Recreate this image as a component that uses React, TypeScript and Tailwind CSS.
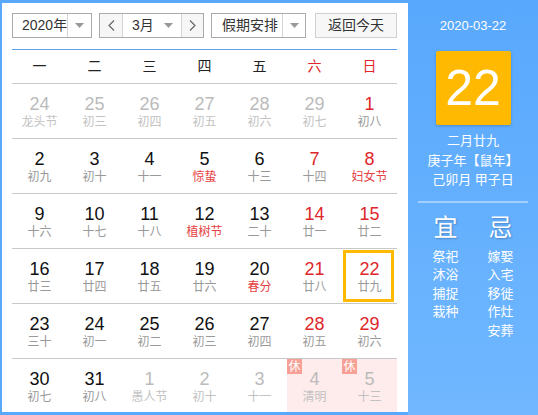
import React from "react";

type Day = {
  n: number;
  l: string;
  other?: boolean;
  red?: boolean;
  fest?: boolean;
  today?: boolean;
  rest?: boolean;
};

const weekdays = ["一", "二", "三", "四", "五", "六", "日"];

const rows: Day[][] = [
  [
    { n: 24, l: "龙头节", other: true },
    { n: 25, l: "初三", other: true },
    { n: 26, l: "初四", other: true },
    { n: 27, l: "初五", other: true },
    { n: 28, l: "初六", other: true },
    { n: 29, l: "初七", other: true },
    { n: 1, l: "初八", red: true },
  ],
  [
    { n: 2, l: "初九" },
    { n: 3, l: "初十" },
    { n: 4, l: "十一" },
    { n: 5, l: "惊蛰", fest: true },
    { n: 6, l: "十三" },
    { n: 7, l: "十四", red: true },
    { n: 8, l: "妇女节", red: true, fest: true },
  ],
  [
    { n: 9, l: "十六" },
    { n: 10, l: "十七" },
    { n: 11, l: "十八" },
    { n: 12, l: "植树节", fest: true },
    { n: 13, l: "二十" },
    { n: 14, l: "廿一", red: true },
    { n: 15, l: "廿二", red: true },
  ],
  [
    { n: 16, l: "廿三" },
    { n: 17, l: "廿四" },
    { n: 18, l: "廿五" },
    { n: 19, l: "廿六" },
    { n: 20, l: "春分", fest: true },
    { n: 21, l: "廿八", red: true },
    { n: 22, l: "廿九", red: true, today: true },
  ],
  [
    { n: 23, l: "三十" },
    { n: 24, l: "初一" },
    { n: 25, l: "初二" },
    { n: 26, l: "初三" },
    { n: 27, l: "初四" },
    { n: 28, l: "初五", red: true },
    { n: 29, l: "初六", red: true },
  ],
  [
    { n: 30, l: "初七" },
    { n: 31, l: "初八" },
    { n: 1, l: "愚人节", other: true },
    { n: 2, l: "初十", other: true },
    { n: 3, l: "十一", other: true },
    { n: 4, l: "清明", other: true, rest: true },
    { n: 5, l: "十三", other: true, rest: true },
  ],
];

const yi = ["祭祀", "沐浴", "捕捉", "栽种"];
const ji = ["嫁娶", "入宅", "移徙", "作灶", "安葬"];

const Caret = () => (
  <svg width="9" height="5" viewBox="0 0 9 5">
    <path d="M0 0h9L4.5 5z" fill="#999" />
  </svg>
);

const Cell = ({ d }: { d: Day }) => {
  const numColor = d.other ? "text-[#bbbbbb]" : d.red ? "text-[#e0262b]" : "text-[#111]";
  const lunarColor = d.other ? "text-[#c2c2c2]" : d.fest ? "text-[#e6403f]" : "text-[#999]";
  return (
    <div className={`relative flex h-[54px] flex-col items-center pt-[9px] ${d.rest ? "bg-[#fdeceb]" : ""}`}>
      {d.rest && (
        <span className="absolute left-0 top-0 flex h-[15px] w-[15px] items-center justify-center bg-[#f7a096] text-[12px] leading-none text-white">
          休
        </span>
      )}
      {d.today && <div className="absolute bottom-[1px] left-[1px] right-[3px] top-[1px] border-[3px] border-[#ffb900]" />}
      <span className={`text-[18px] leading-[22px] ${numColor}`}>{d.n}</span>
      <span className={`text-[12px] leading-[14px] ${lunarColor}`}>{d.l}</span>
    </div>
  );
};

export default function App() {
  return (
    <div
      className="flex h-[415px] w-[538px] overflow-hidden bg-[#5aa8fb] pb-[3px] pl-[2px] pt-[3px]"
      style={{ fontFamily: '"Liberation Sans", "Noto Sans CJK SC", sans-serif' }}
    >
      <div className="h-full w-[406px] overflow-hidden bg-white pl-[10px] pr-[11px] pt-[10px]">
        {/* header controls */}
        <div className="flex h-[25px] whitespace-nowrap text-[14px] text-[#333]">
          <div className="flex w-[80px] border border-[#aaa]">
            <span className="flex w-[54px] items-center pl-[9px]">2020年</span>
            <span className="flex flex-1 items-center justify-center border-l border-[#d5d5d5]">
              <Caret />
            </span>
          </div>
          <div className="ml-[7px] flex w-[105px] border border-[#aaa]">
            <span className="flex w-[22px] items-center justify-center bg-[#f6f6f6] text-[#666]">
              <svg width="7" height="11" viewBox="0 0 7 11">
                <path d="M6 0.5L1 5.5l5 5" fill="none" stroke="#666" strokeWidth="1.2" />
              </svg>
            </span>
            <span className="flex w-[60px] items-center justify-between border-x border-[#d5d5d5] pl-[9px] pr-[8px]">
              3月
              <Caret />
            </span>
            <span className="flex flex-1 items-center justify-center bg-[#f6f6f6]">
              <svg width="7" height="11" viewBox="0 0 7 11">
                <path d="M1 0.5l5 5-5 5" fill="none" stroke="#666" strokeWidth="1.2" />
              </svg>
            </span>
          </div>
          <div className="ml-[7px] flex w-[95px] border border-[#aaa]">
            <span className="flex w-[70px] items-center pl-[10px]">假期安排</span>
            <span className="flex flex-1 items-center justify-center border-l border-[#d5d5d5]">
              <Caret />
            </span>
          </div>
          <div className="ml-auto flex w-[82px] items-center justify-center border border-[#d0d0d0] bg-[#f7f7f7]">
            返回今天
          </div>
        </div>

        <div className="mt-[11px] h-px bg-[#5b9fe6]" />

        {/* weekday header */}
        <div className="grid h-[34px] grid-cols-7 border-b border-[#c8c8c8] text-[14px]">
          {weekdays.map((w, i) => (
            <span key={w} className={`flex items-center justify-center ${i >= 5 ? "text-[#e0262b]" : "text-[#222]"}`}>
              {w}
            </span>
          ))}
        </div>

        {rows.map((r, i) => (
          <div key={i} className="grid grid-cols-7 border-b border-[#c8c8c8]">
            {r.map((d, j) => (
              <Cell key={j} d={d} />
            ))}
          </div>
        ))}
      </div>

      {/* right info panel */}
      <div className="-mt-[3px] -mb-[3px] flex flex-1 flex-col items-center bg-gradient-to-b from-[#58a8fd] to-[#70b7ff] pt-[17px] text-white">
        <span className="text-[13px] leading-[18px]">2020-03-22</span>
        <div className="mt-[16px] flex h-[74px] w-[75px] items-center justify-center rounded-[2px] bg-[#ffb900] shadow-[0_1px_3px_rgba(0,0,0,0.2)]">
          <span className="text-[50px] leading-none">22</span>
        </div>
        <div className="mt-[6px] flex flex-col items-center text-[13px] leading-[19.5px]">
          <span>二月廿九</span>
          <span>庚子年【鼠年】</span>
          <span>己卯月 甲子日</span>
        </div>
        <div className="mt-[11px] h-[2px] w-[110px] bg-white/40" />
        <div className="mt-[11px] flex">
          <div className="flex w-[55px] flex-col items-center">
            <span className="text-[24px] leading-[28px] [text-shadow:1px_1px_2px_rgba(0,0,0,0.25)]">宜</span>
            <div className="mt-[6px] flex flex-col items-center text-[13px] leading-[18.5px]">
              {yi.map((t) => (
                <span key={t}>{t}</span>
              ))}
            </div>
          </div>
          <div className="flex w-[55px] flex-col items-center">
            <span className="text-[24px] leading-[28px] [text-shadow:1px_1px_2px_rgba(0,0,0,0.25)]">忌</span>
            <div className="mt-[6px] flex flex-col items-center text-[13px] leading-[18.5px]">
              {ji.map((t) => (
                <span key={t}>{t}</span>
              ))}
            </div>
          </div>
        </div>
      </div>
    </div>
  );
}
